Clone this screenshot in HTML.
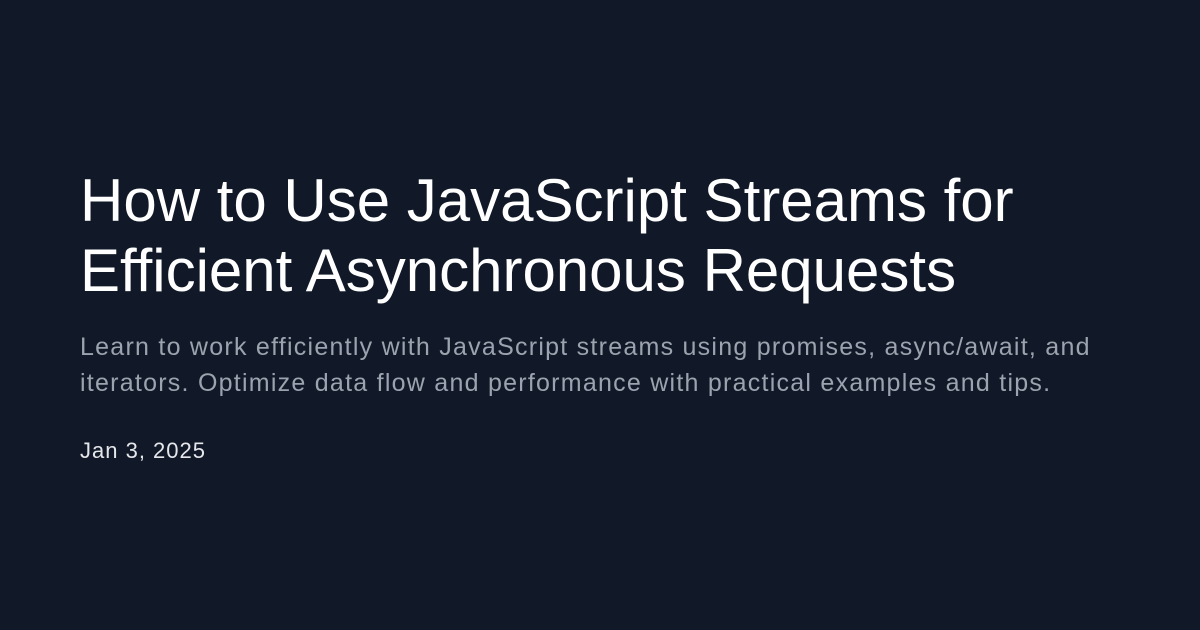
<!DOCTYPE html>
<html><head><meta charset="utf-8"><style>
html,body{margin:0;padding:0;}
body{width:1200px;height:630px;background:#111827;font-family:"Liberation Sans",sans-serif;position:relative;overflow:hidden;}
h1{position:absolute;left:80px;top:166px;margin:0;font-weight:400;font-size:60px;line-height:70px;color:#ffffff;letter-spacing:0;width:1100px;}
p{position:absolute;left:80px;top:329px;margin:0;font-size:25px;line-height:36px;color:#9ca3af;letter-spacing:1.25px;width:1110px;}
.d{position:absolute;left:80px;top:438px;font-size:22px;color:#e5e7eb;letter-spacing:1px;}
</style></head><body>
<h1>How to Use JavaScript Streams for<br>Efficient Asynchronous Requests</h1>
<p>Learn to work efficiently with JavaScript streams using promises, async/await, and<br>iterators. Optimize data flow and performance with practical examples and tips.</p>
<div class="d">Jan 3, 2025</div>
</body></html>
